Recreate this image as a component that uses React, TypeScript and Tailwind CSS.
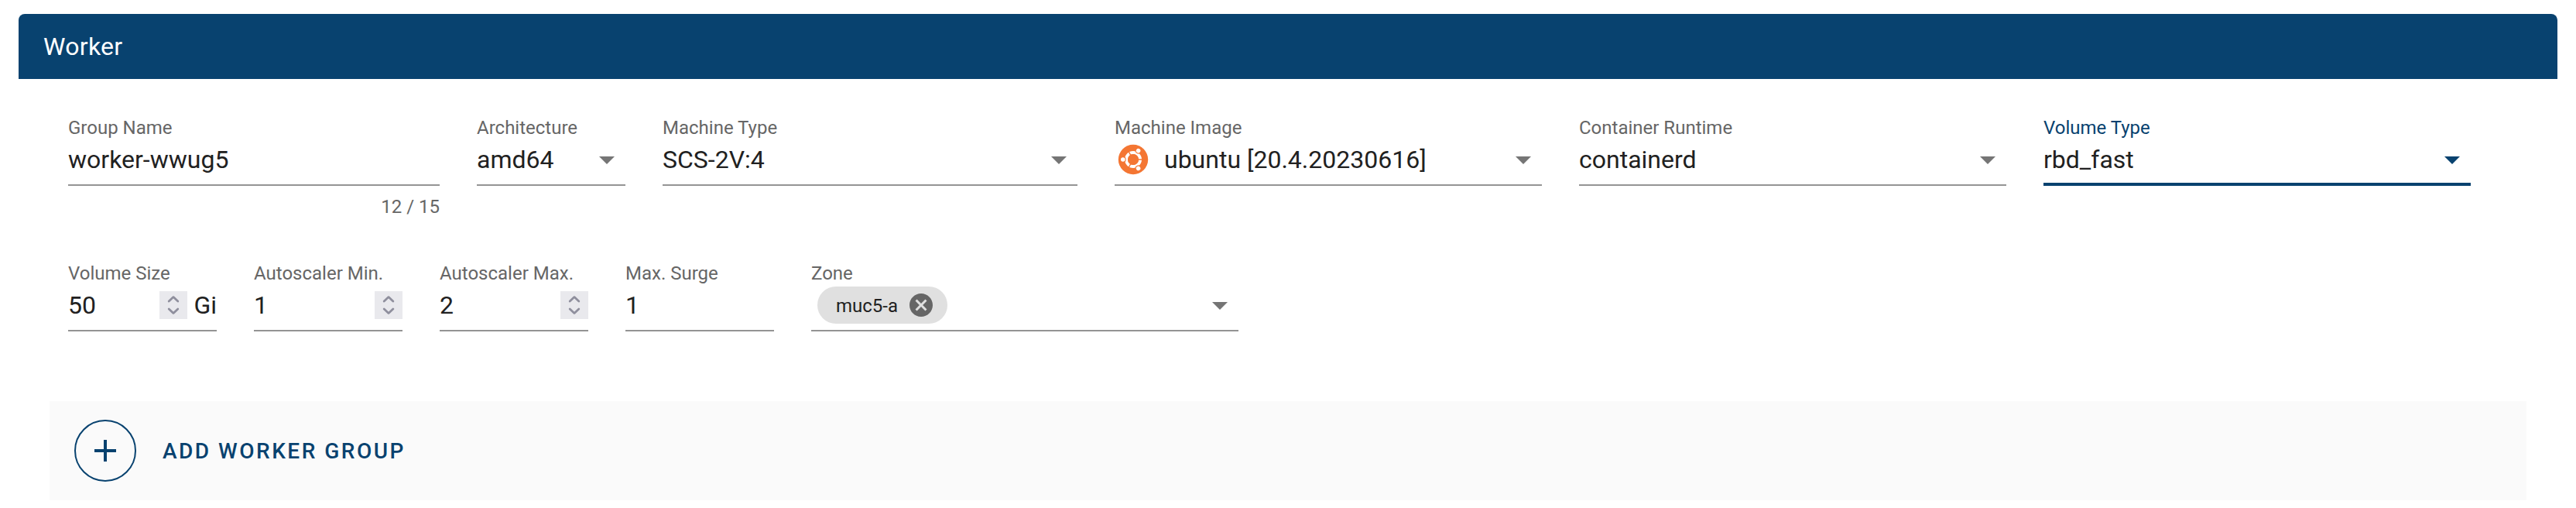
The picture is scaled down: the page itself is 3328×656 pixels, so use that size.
import type { ReactNode } from "react";

const ARROW = "M7,10L12,15L17,10H7Z";
const CLOSE =
  "M12,2C17.53,2 22,6.47 22,12C22,17.53 17.53,22 12,22C6.47,22 2,17.53 2,12C2,6.47 6.47,2 12,2M15.59,7L12,10.59L8.41,7L7,8.41L10.59,12L7,15.59L8.41,17L12,13.41L15.59,17L17,15.59L13.41,12L17,8.41L15.59,7Z";
const PLUS = "M19,13H13V19H11V13H5V11H11V5H13V11H19V13Z";

function Icon({ path, className }: { path: string; className: string }) {
  return (
    <svg viewBox="0 0 24 24" fill="currentColor" className={className}>
      <path d={path} />
    </svg>
  );
}

function Ubuntu() {
  return (
    <svg viewBox="0 0 40 40" className="mr-5 ml-1 size-10 shrink-0">
      <circle cx="20" cy="20" r="19.2" fill="#f47633" />
      <circle cx="20" cy="20" r="9" fill="none" stroke="#fff" strokeWidth="4" />
      <g stroke="#f47633" strokeWidth="1.4">
        <path d="M20 20H33M20 20L13.5 8.7M20 20L13.5 31.3" />
      </g>
      <circle cx="20" cy="20" r="7" fill="#f47633" />
      {[0, 120, 240].map((a) => (
        <g key={a} transform={`rotate(${a} 20 20)`}>
          <circle cx="6.8" cy="20" r="3.9" fill="#f47633" />
          <circle cx="6.8" cy="20" r="2.8" fill="#fff" />
        </g>
      ))}
    </svg>
  );
}

function Spinner() {
  return (
    <span className="ml-auto flex size-9 shrink-0 items-center justify-center bg-[#e9e9ed]">
      <svg
        viewBox="0 0 36 36"
        className="size-9"
        fill="none"
        stroke="#8f8f9d"
        strokeWidth="2.8"
        strokeLinecap="round"
        strokeLinejoin="round"
      >
        <path d="M12.2 13L18 7.6L23.8 13M12.2 23L18 28.4L23.8 23" />
      </svg>
    </span>
  );
}

interface FieldProps {
  label: string;
  width: string;
  children: ReactNode;
  select?: boolean;
  active?: boolean;
  counter?: string;
}

function Field({ label, width, children, select, active, counter }: FieldProps) {
  return (
    <div className={`shrink-0 ${width}`}>
      <div className={`h-8 text-2xl/[34px] whitespace-nowrap ${active ? "text-[#08426f]" : "text-[#666666]"}`}>
        {label}
      </div>
      <div className={`h-15 ${active ? "border-b-4 border-[#08426f]" : "border-b-2 border-[#949494]"}`}>
        <div className="flex h-13 items-center text-[32px] whitespace-nowrap text-[#212121]">
          {children}
          {select && (
            <Icon path={ARROW} className={`ml-auto size-12 shrink-0 ${active ? "text-[#08426f]" : "text-[#757575]"}`} />
          )}
        </div>
      </div>
      {counter && <div className="mt-[11px] text-right text-2xl/8 text-[#666666]">{counter}</div>}
    </div>
  );
}

export default function App() {
  return (
    <div className="h-[656px] w-[3328px] overflow-hidden bg-white px-6 pt-[18px] font-[Roboto,sans-serif]">
      <header className="flex h-[84px] items-center rounded-t-lg bg-[#08426f] px-8 text-[32px] tracking-[0.3px] text-white">
        Worker
      </header>
      <div className="px-10 pt-[46px]">
        <div className="flex h-[188px] gap-12 px-6">
          <Field label="Group Name" width="w-[480px]" counter="12 / 15">worker-wwug5</Field>
          <Field label="Architecture" width="w-[192px]" select>amd64</Field>
          <Field label="Machine Type" width="w-[536px]" select>SCS-2V:4</Field>
          <Field label="Machine Image" width="w-[552px]" select>
            <Ubuntu />
            ubuntu [20.4.20230616]
          </Field>
          <Field label="Container Runtime" width="w-[552px]" select>containerd</Field>
          <Field label="Volume Type" width="w-[552px]" select active>rbd_fast</Field>
        </div>
        <div className="flex h-[182px] gap-12 px-6">
          <Field label="Volume Size" width="w-[192px]">
            50
            <Spinner />
            <span className="ml-2">Gi</span>
          </Field>
          <Field label="Autoscaler Min." width="w-[192px]">1<Spinner /></Field>
          <Field label="Autoscaler Max." width="w-[192px]">2<Spinner /></Field>
          <Field label="Max. Surge" width="w-[192px]">1</Field>
          <Field label="Zone" width="w-[552px]" select>
            <span className="ml-2 flex h-12 w-[168px] items-center rounded-full bg-[#e0e0e0] pl-6 text-2xl">
              <span className="pt-0.5">muc5-a</span>
              <Icon path={CLOSE} className="mr-4 ml-auto size-9 text-[#666666]" />
            </span>
          </Field>
        </div>
        <div className="flex h-32 items-center bg-[#fafafa] px-8 text-[#08426f]">
          <button className="flex size-20 items-center justify-center rounded-full border-2 border-[#08426f]">
            <Icon path={PLUS} className="size-12" />
          </button>
          <span className="ml-[34px] pt-0.5 text-[28px] font-medium tracking-[2.5px]">ADD WORKER GROUP</span>
        </div>
      </div>
    </div>
  );
}
